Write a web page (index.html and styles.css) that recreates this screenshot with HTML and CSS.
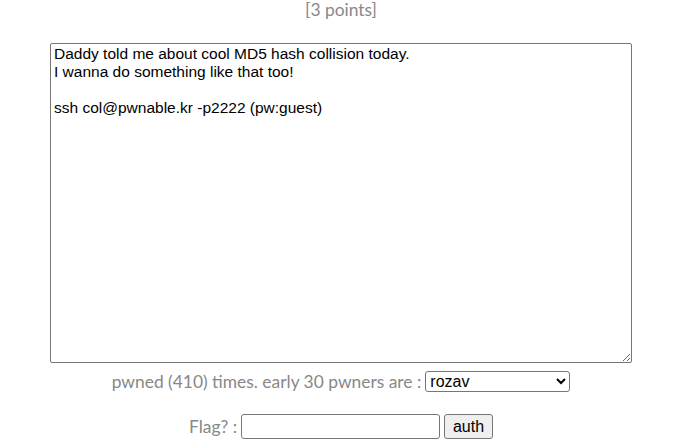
FILE: index.html
```html
<!DOCTYPE html>
<html lang="en">
  <head>
    <meta charset="UTF-8" />
    <meta name="viewport" content="width=device-width, initial-scale=1.0" />
    <title>collision</title>
    <link rel="stylesheet" href="styles.css">
  </head>
  <body>
    <div class="container">
      <div class="points">[3 points]</div>
      <textarea class="desc" readonly>Daddy told me about cool MD5 hash collision today.
I wanna do something like that too!

ssh col@pwnable.kr -p2222 (pw:guest)</textarea>
      <div class="pwners">
        pwned (410) times. early 30 pwners are :
        <select class="pwner_list">
          <option>rozav</option>
        </select>
      </div>
      <form action="" class="flag_form">
        <label for="flag">Flag? :</label>
        <input type="text" id="flag" name="flag" />
        <button type="submit">auth</button>
      </form>
    </div>
  </body>
</html>
```

FILE: styles.css
```css
body {
  margin: 0;
  overflow: hidden;
  background-color: #fff;
  font-family: "Lato", "Open Sans", sans-serif;
  color: #888;
  font-size: 17.4px;
}
.container {
  box-sizing: border-box;
  width: 677px;
  padding-left: 5px;
  display: flex;
  flex-direction: column;
  align-items: center;
}
.points {
  height: 21px;
  line-height: 20px;
}
.desc {
  display: block;
  box-sizing: border-box;
  width: 582px;
  height: 320px;
  margin: 22px 0 0 0;
  padding: 1px 3px 0 3px;
  border: 1px solid #767676;
  border-radius: 2px;
  font-family: "Liberation Sans", Arial, sans-serif;
  font-size: 15.5px;
  line-height: 18px;
  color: #000;
  resize: both;
}
.pwners {
  margin-top: 8px;
  height: 21px;
  line-height: 21px;
  display: flex;
  align-items: center;
  gap: 4px;
}
.pwner_list {
  box-sizing: border-box;
  width: 145px;
  height: 21px;
  font-family: "Liberation Sans", Arial, sans-serif;
  font-size: 16px;
  color: #000;
  border: 1px solid #767676;
  border-radius: 3px;
  background: #fff;
}
.flag_form {
  margin: 22px 0 0 0;
  display: flex;
  align-items: center;
  gap: 4px;
}
.flag_form input {
  box-sizing: border-box;
  width: 199px;
  height: 25px;
  border: 1px solid #767676;
  border-radius: 3px;
}
.flag_form button {
  box-sizing: border-box;
  height: 25px;
  width: 49px;
  font-family: "Liberation Sans", Arial, sans-serif;
  font-size: 16px;
  color: #000;
  background-color: #efefef;
  border: 1px solid #767676;
  border-radius: 3px;
}
```
